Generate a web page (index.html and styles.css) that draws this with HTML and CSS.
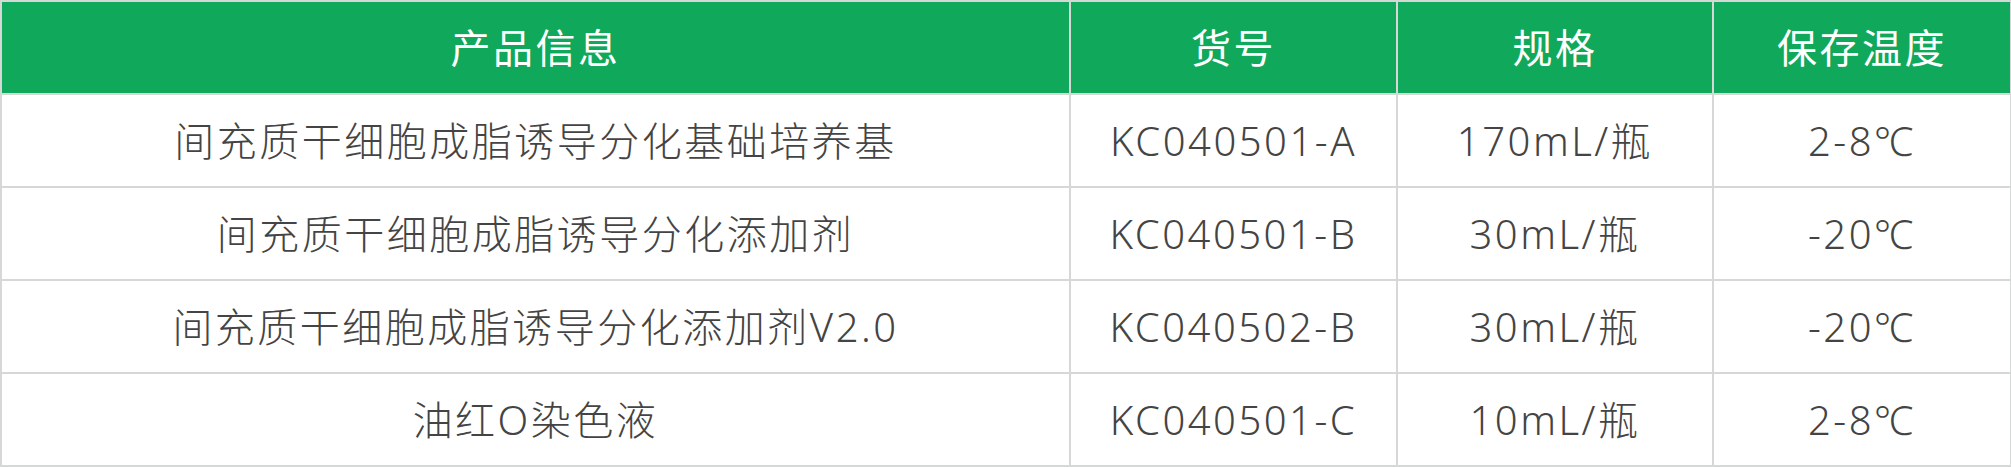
FILE: index.html
```html
<!DOCTYPE html>
<html lang="zh-CN">
<head>
<meta charset="utf-8">
<title>产品信息</title>
<link rel="stylesheet" href="styles.css">
</head>
<body>
<table class="spec">
  <colgroup>
    <col class="c-name">
    <col class="c-code">
    <col class="c-size">
    <col class="c-temp">
  </colgroup>
  <thead>
    <tr><th>产品信息</th><th>货号</th><th>规格</th><th>保存温度</th></tr>
  </thead>
  <tbody>
    <tr><td>间充质干细胞成脂诱导分化基础培养基</td><td>KC040501-A</td><td>170mL/瓶</td><td>2-8℃</td></tr>
    <tr><td>间充质干细胞成脂诱导分化添加剂</td><td>KC040501-B</td><td>30mL/瓶</td><td>-20℃</td></tr>
    <tr><td>间充质干细胞成脂诱导分化添加剂V2.0</td><td>KC040502-B</td><td>30mL/瓶</td><td>-20℃</td></tr>
    <tr><td>油红O染色液</td><td>KC040501-C</td><td>10mL/瓶</td><td>2-8℃</td></tr>
  </tbody>
</table>
</body>
</html>
```
FILE: styles.css
```css
html, body {
  margin: 0;
  padding: 0;
  background: #ffffff;
}
.spec {
  border-collapse: collapse;
  table-layout: fixed;
  width: 2010px;
  font-family: "Noto Sans", "Noto Sans CJK SC", sans-serif;
  font-size: 40px;
  letter-spacing: 2.5px;
}
.c-name { width: 1069px; }
.c-code { width: 327px; }
.c-size { width: 316px; }
.c-temp { width: 298px; }
.spec th,
.spec td {
  border: 2px solid #d6d8d7;
  height: 91px;
  padding: 0;
  text-align: center;
  vertical-align: middle;
  line-height: 1.2;
}
.spec th {
  background: #10a85a;
  color: #ffffff;
  font-weight: 400;
}
.spec td {
  color: #444444;
  font-weight: 300;
}
```
